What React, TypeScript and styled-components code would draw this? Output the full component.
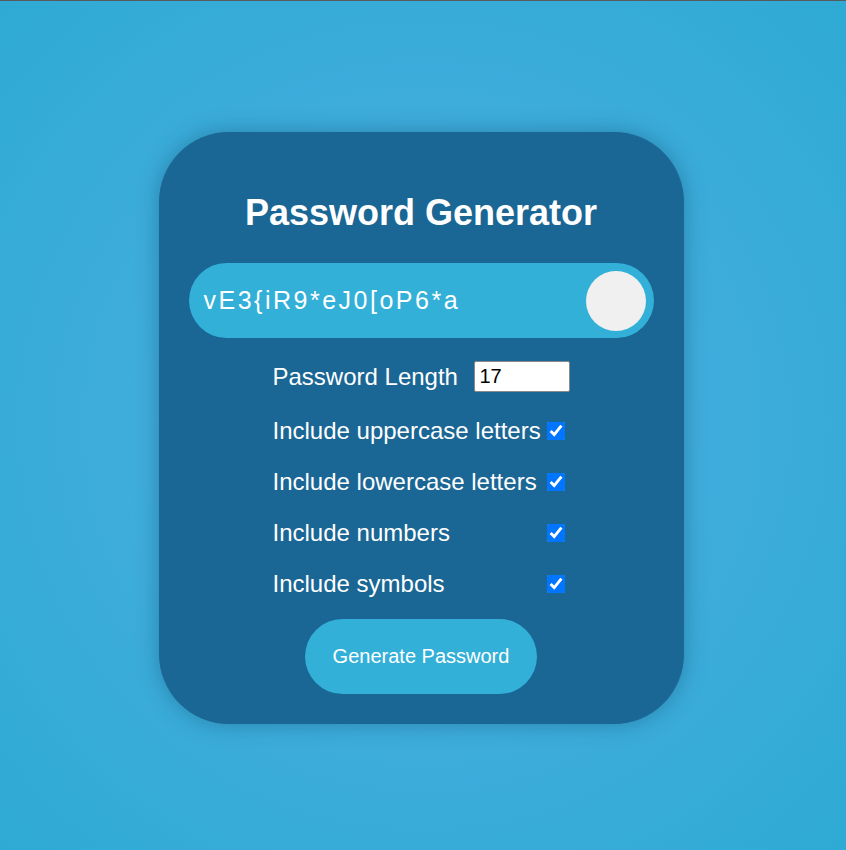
import React, { useState } from "react";
import styled, { createGlobalStyle } from "styled-components";

const Global = createGlobalStyle`
  * { box-sizing: border-box; }
  html, body { margin: 0; padding: 0; }
  body {
    font-family: "Liberation Sans", Arial, sans-serif;
    border-top: 1px solid #585a5c;
  }
`;

const Page = styled.div`
  min-height: 849px;
  display: flex;
  align-items: center;
  justify-content: center;
  padding: 5px 4px 0 0;
  background: radial-gradient(circle at 50% 50%, #46abdf 0%, #40addd 45%, #2eaad4 100%);
`;

const Card = styled.div`
  width: 525px;
  padding: 30px;
  border-radius: 70px;
  background: #1a6694;
  box-shadow: 0 0 22px rgba(10, 50, 80, 0.35);
  display: flex;
  flex-direction: column;
  align-items: center;
`;

const Title = styled.h1`
  margin: 32px 0;
  font-size: 36px;
  font-weight: 700;
  color: #ffffff;
  line-height: 37px;
`;

const Field = styled.div`
  width: 100%;
  height: 75px;
  border-radius: 38px;
  background: #32b0d8;
  display: flex;
  align-items: center;
  justify-content: space-between;
  padding: 0 8px 0 15px;
`;

const PasswordText = styled.span`
  font-size: 25px;
  color: #ffffff;
  letter-spacing: 2.5px;
`;

const Knob = styled.div`
  width: 60px;
  height: 60px;
  border-radius: 50%;
  background: #f0f0f0;
`;

const Options = styled.div`
  width: 297px;
  margin: 23px 0;
  display: flex;
  flex-direction: column;
  gap: 27px;
`;

const Row = styled.label`
  display: flex;
  align-items: center;
  justify-content: space-between;
  min-height: 24px;
  line-height: 24px;
  font-size: 24px;
  color: #ffffff;
  white-space: nowrap;
`;

const LengthInput = styled.input`
  width: 96px;
  height: 31px;
  font-size: 20px;
  font-family: "Liberation Sans", Arial, sans-serif;
  padding: 1px 5px;
  border: 1px solid #8a8a8a;
  border-radius: 2px;
  background: #ffffff;
  color: #000;
`;

const Check = styled.input`
  width: 18px;
  height: 18px;
  margin: 3px 5px 3px 4px;
  accent-color: #0075ff;
`;

const Button = styled.button`
  width: 232px;
  height: 75px;
  border: none;
  border-radius: 38px;
  background: #32b0d8;
  color: #ffffff;
  font-size: 20px;
  font-family: "Liberation Sans", Arial, sans-serif;
  cursor: pointer;
`;

const labels = [
  "Include uppercase letters",
  "Include lowercase letters",
  "Include numbers",
  "Include symbols",
];

export default function App() {
  const [len, setLen] = useState("17");
  const [checks, setChecks] = useState([true, true, true, true]);
  return (
    <>
      <Global />
      <Page>
        <Card>
          <Title>Password Generator</Title>
          <Field>
            <PasswordText>vE3{"{"}iR9*eJ0[oP6*a</PasswordText>
            <Knob />
          </Field>
          <Options>
            <Row>
              Password Length
              <LengthInput type="number" value={len} onChange={(e) => setLen(e.target.value)} />
            </Row>
            {labels.map((l, i) => (
              <Row key={l}>
                {l}
                <Check
                  type="checkbox"
                  checked={checks[i]}
                  onChange={() => setChecks(checks.map((c, j) => (j === i ? !c : c)))}
                />
              </Row>
            ))}
          </Options>
          <Button>Generate Password</Button>
        </Card>
      </Page>
    </>
  );
}
